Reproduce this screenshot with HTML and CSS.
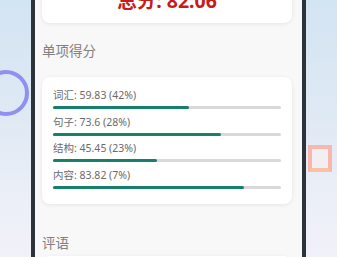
FILE: index.html
```html
<!DOCTYPE html>
<html lang="zh">
<head>
<meta charset="utf-8">
<link rel="stylesheet" href="styles.css">
</head>
<body>
<div class="stage">
  <div class="deco-ring"></div>
  <div class="deco-square"></div>
  <div class="phone">
    <div class="screen">
      <div class="card total-card">
        <div class="total">总分: 82.06</div>
      </div>
      <div class="section-label first">单项得分</div>
      <div class="card scores">
        <div class="row">
          <div class="row-text">词汇: 59.83 (42%)</div>
          <div class="track"><div class="fill" style="width:59.83%"></div></div>
        </div>
        <div class="row">
          <div class="row-text">句子: 73.6 (28%)</div>
          <div class="track"><div class="fill" style="width:73.6%"></div></div>
        </div>
        <div class="row">
          <div class="row-text">结构: 45.45 (23%)</div>
          <div class="track"><div class="fill" style="width:45.45%"></div></div>
        </div>
        <div class="row">
          <div class="row-text">内容: 83.82 (7%)</div>
          <div class="track"><div class="fill" style="width:83.82%"></div></div>
        </div>
      </div>
      <div class="section-label second">评语</div>
      <div class="card comment"></div>
    </div>
  </div>
</div>
</body>
</html>
```

FILE: styles.css
```css
* { box-sizing: border-box; }
html, body {
  margin: 0;
  height: 257px;
  overflow: hidden;
}
body {
  background: linear-gradient(180deg, #d3e4f3 0%, #dfe9f4 45%, #eef0f8 85%, #f1f1f8 100%);
  font-family: "Noto Sans", "Noto Sans CJK SC", sans-serif;
}
.stage {
  position: relative;
  height: 257px;
  padding-left: 31px;
}
.deco-ring {
  position: absolute;
  left: -17px;
  top: 92px;
  width: 46px;
  height: 46px;
  border: 4px solid #8f90ef;
  border-radius: 50%;
}
.deco-square {
  position: absolute;
  left: 308px;
  top: 167px;
  width: 24px;
  height: 27px;
  border: 4px solid #f9b6ad;
  border-bottom-color: #fcc0a2;
  background: #f3eef1;
}
.phone {
  width: 275px;
  height: 300px;
  border-left: 4px solid #2c333b;
  border-right: 4px solid #2c333b;
  background: #f8f8f8;
}
.screen {
  padding: 0 10px 0 7px;
}
.card {
  background: #ffffff;
  border-radius: 8px;
  box-shadow: 0 1px 4px rgba(0, 0, 0, 0.08);
}
.total-card {
  margin-top: -22px;
  height: 45px;
  display: flex;
  justify-content: center;
}
.total {
  color: #c81b1b;
  font-size: 19.5px;
  font-weight: 700;
  line-height: 24px;
  margin-top: 11px;
}
.section-label {
  color: #808080;
  font-size: 13.5px;
  line-height: 20px;
}
.section-label.first {
  margin-top: 18px;
  margin-bottom: 16px;
}
.section-label.second {
  margin-top: 29px;
  margin-bottom: 3px;
}
.scores {
  padding: 11px 11px 15px 11px;
  display: flex;
  flex-direction: column;
  gap: 5.5px;
}
.row-text {
  color: #6a6a6a;
  font-size: 10.5px;
  line-height: 14px;
}
.track {
  margin-top: 4px;
  height: 3px;
  background: #d9d9d9;
  border-radius: 2px;
}
.fill {
  height: 3px;
  background: #17806d;
  border-radius: 2px;
}
.comment {
  height: 40px;
}
```
